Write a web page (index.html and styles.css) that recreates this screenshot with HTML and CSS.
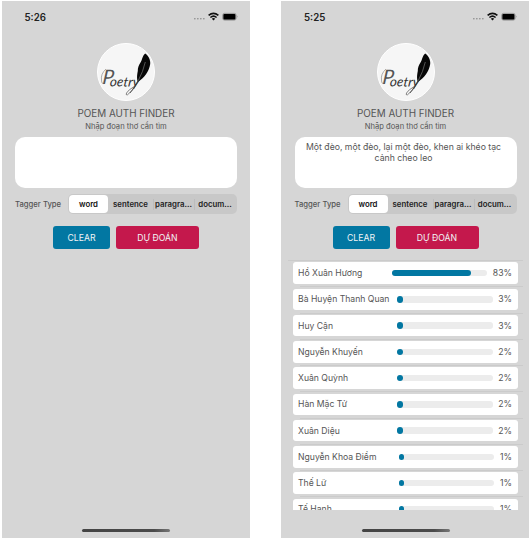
FILE: index.html
```html
<!DOCTYPE html>
<html lang="vi">
<head>
<meta charset="utf-8">
<title>Poem Auth Finder</title>
<link rel="stylesheet" href="styles.css">
</head>
<body>
<svg width="0" height="0" class="defs">
  <defs>
    <symbol id="status" viewBox="0 0 46 10">
      <g fill="#999"><rect x="0" y="6" width="1.6" height="1.4"/><rect x="3" y="6" width="1.6" height="1.4"/><rect x="6" y="6" width="1.6" height="1.4"/><rect x="9" y="6" width="1.6" height="1.4"/></g>
      <g fill="none" stroke="#111" stroke-width="1.6"><path d="M14.6 3.4Q19.5-.7 24.4 3.4"/><path d="M16.4 5.5Q19.5 2.9 22.6 5.5"/></g>
      <path d="M17.8 6.7Q19.5 5.3 21.2 6.7L19.5 8.6Z" fill="#111"/>
      <rect x="28.6" y="1.3" width="13.6" height="6.9" rx="2" fill="#aaa" stroke="#888" stroke-width=".6"/>
      <rect x="29.4" y="2.1" width="12" height="5.3" rx="1" fill="#000"/>
      <path d="M43.1 3.5Q44.3 4.6 43.1 5.7Z" fill="#888"/>
    </symbol>
    <symbol id="logo" viewBox="0 0 58 58">
      <circle cx="29" cy="29" r="28.5" fill="#f6f6f6" stroke="#fff"/>
      <path d="M48.2 10.5C51 12 53.8 17 53.2 21C52.4 28 47 35 41 39C39.4 36 40.2 31 40.8 28C40.6 25 41.8 22 43.8 19C45.4 16.5 45.2 13 48.2 10.5Z" fill="#080808"/>
      <path d="M48.3 19Q46 29 41.5 37" stroke="#777" stroke-width=".7" fill="none"/>
      <path d="M41.5 37Q38 44 33 50" stroke="#444" stroke-width=".9" fill="none"/>
      <path d="M41 39Q37 47 30.5 51.8Q28.5 52.4 29.5 50Q31 47 38 43" stroke="#666" stroke-width=".8" fill="none"/>
      <path d="M8 40Q4.5 42 4.5 37Q3.5 31 9 26" stroke="#999" stroke-width=".8" fill="none"/>
      <text class="logo-cap" transform="translate(5 41) skewX(-6)">P</text>
      <text class="logo-text" transform="translate(12.6 43.2) rotate(1) skewX(-6)">oetry</text>
    </symbol>
  </defs>
</svg>
<main class="stage">
  <section class="phone">
    <header class="status"><span>5:26</span><svg width="46" height="10"><use href="#status"/></svg></header>
    <svg class="logo" width="58" height="58"><use href="#logo"/></svg>
    <h1>POEM AUTH FINDER</h1>
    <p class="hint">Nhập đoạn thơ cần tìm</p>
    <div class="poem"></div>
    <div class="tagger"><span class="label">Tagger Type</span>
      <div class="segments"><b class="active">word</b><b>sentence</b><b>paragra...</b><b>docum...</b></div></div>
    <div class="actions"><button class="clear">CLEAR</button><button class="predict">DỰ ĐOÁN</button></div>
    <div class="home"></div>
  </section>
  <section class="phone second">
    <header class="status"><span>5:25</span><svg width="46" height="10"><use href="#status"/></svg></header>
    <svg class="logo" width="58" height="58"><use href="#logo"/></svg>
    <h1>POEM AUTH FINDER</h1>
    <p class="hint">Nhập đoạn thơ cần tìm</p>
    <div class="poem">Một đèo, một đèo, lại một đèo, khen ai khéo tạc<br>cảnh cheo leo</div>
    <div class="tagger"><span class="label">Tagger Type</span>
      <div class="segments"><b class="active">word</b><b>sentence</b><b>paragra...</b><b>docum...</b></div></div>
    <div class="actions"><button class="clear">CLEAR</button><button class="predict">DỰ ĐOÁN</button></div>
    <div class="results">
      <div class="row"><div class="card"><span class="name">Hồ Xuân Hương</span><i class="bar"><i style="width:83%"></i></i><span>83%</span></div></div>
      <div class="row"><div class="card"><span class="name">Bà Huyện Thanh Quan</span><i class="bar"><i style="width:3%"></i></i><span>3%</span></div></div>
      <div class="row"><div class="card"><span class="name">Huy Cận</span><i class="bar"><i style="width:3%"></i></i><span>3%</span></div></div>
      <div class="row"><div class="card"><span class="name">Nguyễn Khuyến</span><i class="bar"><i style="width:2%"></i></i><span>2%</span></div></div>
      <div class="row"><div class="card"><span class="name">Xuân Quỳnh</span><i class="bar"><i style="width:2%"></i></i><span>2%</span></div></div>
      <div class="row"><div class="card"><span class="name">Hàn Mặc Tử</span><i class="bar"><i style="width:2%"></i></i><span>2%</span></div></div>
      <div class="row"><div class="card"><span class="name">Xuân Diệu</span><i class="bar"><i style="width:2%"></i></i><span>2%</span></div></div>
      <div class="row"><div class="card"><span class="name">Nguyễn Khoa Điềm</span><i class="bar"><i style="width:1%"></i></i><span>1%</span></div></div>
      <div class="row"><div class="card"><span class="name">Thế Lữ</span><i class="bar"><i style="width:1%"></i></i><span>1%</span></div></div>
      <div class="row"><div class="card"><span class="name">Tế Hanh</span><i class="bar"><i style="width:1%"></i></i><span>1%</span></div></div>
    </div>
    <div class="home"></div>
  </section>
</main>
</body>
</html>
```
FILE: styles.css
```css
* { box-sizing: border-box; }
body { margin: 0; background: #fff; font-family: Inter, "Liberation Sans", sans-serif; color: #555; overflow: hidden; }
.defs { display: block; }
.stage { display: flex; gap: 31px; padding: 1px 2px; height: 540px; }
.phone { width: 248px; height: 537px; flex: none; background: #d6d6d6; display: flex; flex-direction: column; align-items: center; padding: 0 13px; }
.second { padding: 0 12.5px 0 13.5px; }
.status { width: 100%; height: 31px; display: flex; justify-content: space-between; align-items: center; padding: 1px 0 0 9.5px; font-size: 9.7px; font-weight: 600; color: #222; }
.status svg { margin: -1px -2.5px 0 0; }
.logo { display: block; margin-top: 11px; flex: none; }
.logo-cap { font: italic 400 20px Lato, sans-serif; fill: #555; }
.logo-text { font: italic 400 13.4px Lato, sans-serif; fill: #333; }
h1 { margin: 6px 0 0; font-size: 9.9px; line-height: 13px; font-weight: 400; letter-spacing: -.02px; white-space: nowrap; }
.hint { margin: 1px 0 0; font-size: 7.6px; line-height: 11px; white-space: nowrap; }
.poem { width: 222px; height: 51px; margin-top: 5px; padding: 5px 4px 0 0; background: #fff; border-radius: 10px; text-align: center; font-size: 8.7px; line-height: 11px; white-space: nowrap; flex: none; }
.tagger { width: 222px; height: 20px; margin-top: 6px; display: flex; align-items: center; justify-content: space-between; flex: none; }
.label { font-size: 7.7px; font-weight: 500; white-space: nowrap; }
.segments { width: 169px; height: 20px; padding: 1px; display: grid; grid-template-columns: 39px 45px 41px 42px; background: #c8c8c8; border-radius: 5px; color: #222; }
.segments b { display: flex; align-items: center; justify-content: center; font-size: 7.8px; font-weight: 600; white-space: nowrap; }
.segments b + b + b { background: linear-gradient(#bcbcbc, #bcbcbc) 0 50% / 1px 11px no-repeat; }
.segments .active { background: #fff; border-radius: 4px; color: #111; }
.actions { display: flex; gap: 6px; margin-top: 12px; flex: none; }
button { border: 0; height: 23px; padding: 0; border-radius: 3px; color: #f1f4f6; font: 400 8.7px Inter, sans-serif; }
.clear { width: 57px; background: #0277a2; }
.predict { width: 83px; background: #c4184c; }
.results { width: 235px; height: 250px; margin-top: 11px; overflow: hidden; flex: none; }
.row { height: 26.25px; padding: 2.4px 5px 0; background: linear-gradient(#cbcbcb, #cbcbcb) 12px 0 / 100% 1px no-repeat; }
.row:first-child { background-position: 0 0; }
.card { height: 21.6px; padding: 0 6px 0 5px; display: flex; align-items: center; gap: 5.6px; background: #fff; border-radius: 3px; font-size: 8.65px; white-space: nowrap; }
.name { flex: 1; min-width: 0; }
.bar { width: 95.5px; height: 6.4px; background: #ececec; border-radius: 3px; flex: none; }
.bar i { display: block; height: 100%; min-width: 5.5px; background: #0277a2; border-radius: 3px; }
.home { width: 88px; height: 3px; margin: auto 0 6px; border-radius: 2px; background: linear-gradient(90deg, #444, #4b4b4b 82%, #777); flex: none; }
```
